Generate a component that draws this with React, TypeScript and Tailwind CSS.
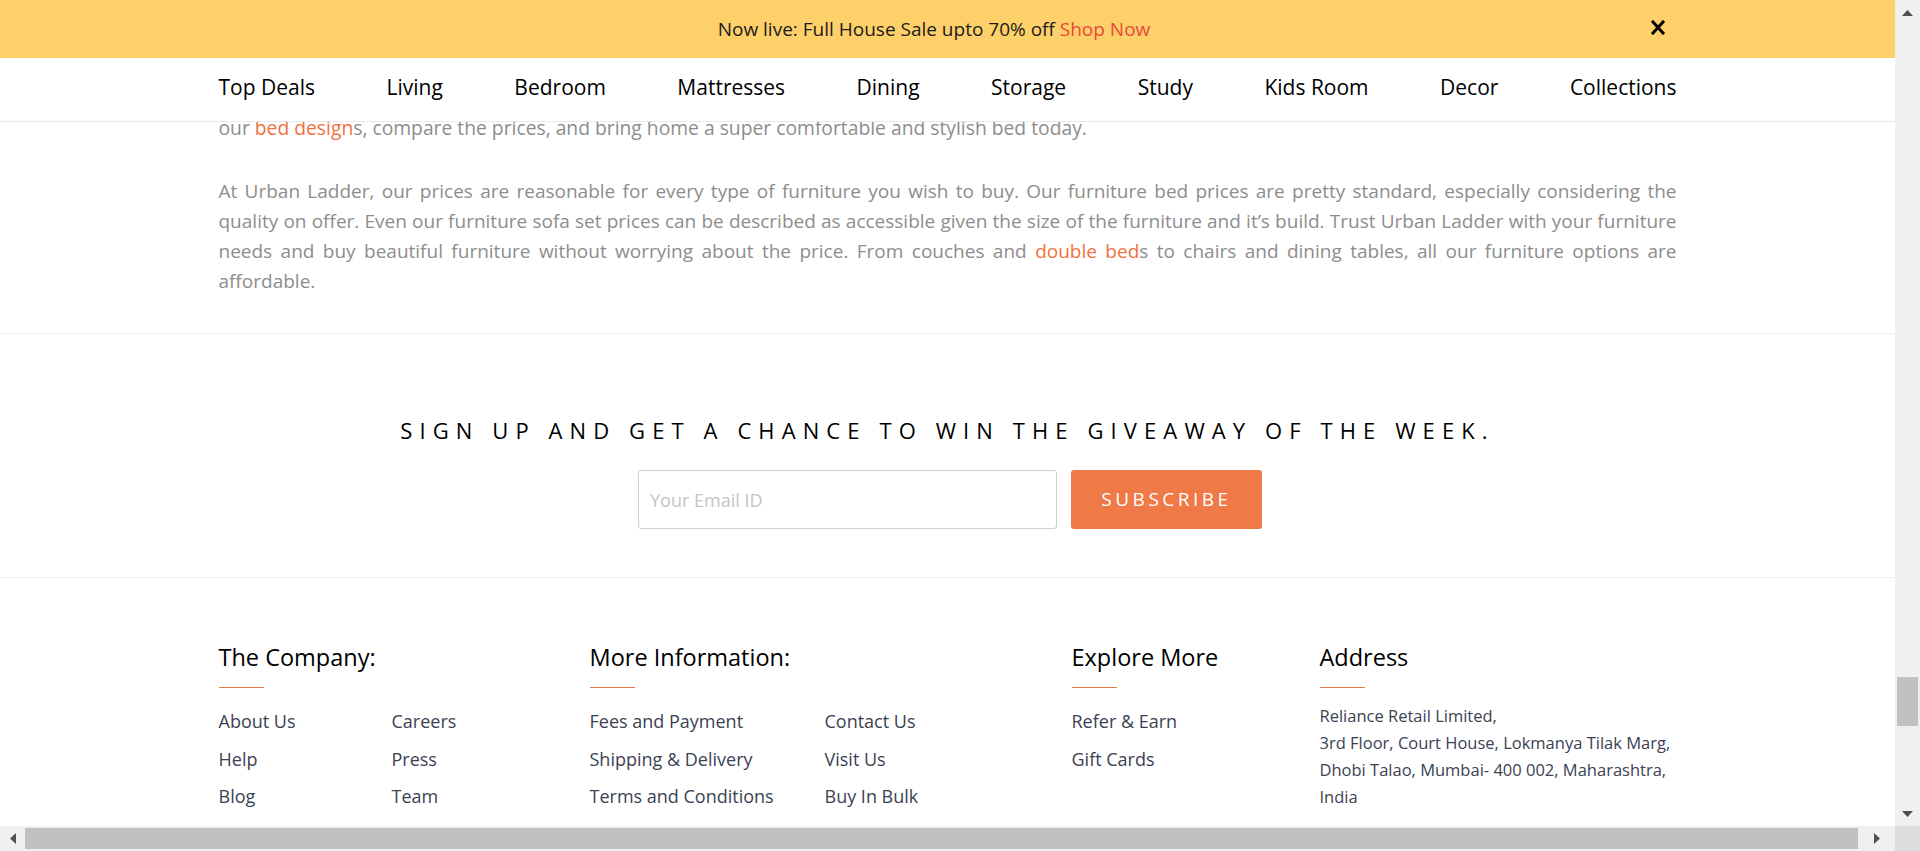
const navItems = [
  "Top Deals",
  "Living",
  "Bedroom",
  "Mattresses",
  "Dining",
  "Storage",
  "Study",
  "Kids Room",
  "Decor",
  "Collections",
];

const footerCols = [
  {
    title: "The Company:",
    sub: "grid-cols-[173px_1fr]",
    links: [
      ["About Us", "Help", "Blog"],
      ["Careers", "Press", "Team"],
    ],
  },
  {
    title: "More Information:",
    sub: "grid-cols-[235px_1fr]",
    links: [
      ["Fees and Payment", "Shipping & Delivery", "Terms and Conditions"],
      ["Contact Us", "Visit Us", "Buy In Bulk"],
    ],
  },
  {
    title: "Explore More",
    sub: "grid-cols-1",
    links: [["Refer & Earn", "Gift Cards"]],
  },
];

const address = [
  "Reliance Retail Limited,",
  "3rd Floor, Court House, Lokmanya Tilak Marg,",
  "Dhobi Talao, Mumbai- 400 002, Maharashtra,",
  "India",
];

function Link({ children }: { children: React.ReactNode }) {
  return <span className="text-[#f0713d]">{children}</span>;
}

function Triangle({ dir }: { dir: "up" | "down" | "left" | "right" }) {
  const points = {
    up: "0,6 5.5,0 11,6",
    down: "0,0 11,0 5.5,6",
    left: "6,0 6,11 0,5.5",
    right: "0,0 6,5.5 0,11",
  }[dir];
  const vertical = dir === "up" || dir === "down";
  return (
    <svg
      width={vertical ? 11 : 6}
      height={vertical ? 6 : 11}
      viewBox={vertical ? "0 0 11 6" : "0 0 6 11"}
    >
      <polygon points={points} fill="#505050" />
    </svg>
  );
}

function Header() {
  return (
    <>
      <div className="relative flex h-[58px] items-center justify-center bg-[#fed069] pr-[27px] text-[19px] text-[#1c1c1c]">
        <span>
          Now live: Full House Sale upto 70% off{" "}
          <span className="text-[#e9483e]">Shop Now</span>
        </span>
        <button className="absolute right-[230px] top-[20px]">
          <svg width="14" height="15" viewBox="0 0 14 15">
            <path
              d="M2 2 L12 13 M12 2 L2 13"
              stroke="#000"
              strokeWidth="3"
              strokeLinecap="square"
            />
          </svg>
        </button>
      </div>
      <nav className="h-[64px] border-b border-[#e9e9e9] bg-white">
        <ul className="mx-auto flex h-full w-[1458px] items-center justify-between pb-[4px] text-[21px] text-black">
          {navItems.map((item) => (
            <li key={item}>{item}</li>
          ))}
        </ul>
      </nav>
    </>
  );
}

function About() {
  const just = "whitespace-nowrap text-justify [text-align-last:justify]";
  return (
    <section className="overflow-hidden border-b border-[#eeeeee] pb-[37px]">
      <div className="mx-auto w-[1458px] text-[19px] leading-[30px] text-[#8d8d8d]">
        <p className="-mt-[9px] text-[19.3px]">
          our <Link>bed design</Link>s, compare the prices, and bring home a
          super comfortable and stylish bed today.
        </p>
        <div className="mt-[33px]">
          <div className={just}>
            At Urban Ladder, our prices are reasonable for every type of
            furniture you wish to buy. Our furniture bed prices are pretty
            standard, especially considering the
          </div>
          <div className={just}>
            quality on offer. Even our furniture sofa set prices can be
            described as accessible given the size of the furniture and it’s
            build. Trust Urban Ladder with your furniture
          </div>
          <div className={just}>
            needs and buy beautiful furniture without worrying about the price.
            From couches and <Link>double bed</Link>s to chairs and dining
            tables, all our furniture options are
          </div>
          <div>affordable.</div>
        </div>
      </div>
    </section>
  );
}

function Signup() {
  return (
    <section className="flex flex-col items-center border-b border-[#eeeeee] pt-[80px] pb-[48px]">
      <h2 className="text-[22px] leading-[33px] tracking-[7.1px] text-black">
        SIGN UP AND GET A CHANCE TO WIN THE GIVEAWAY OF THE WEEK.
      </h2>
      <div className="mt-[23px] ml-[5px] flex gap-[14px]">
        <input
          placeholder="Your Email ID"
          className="h-[59px] w-[419px] rounded-[3px] border border-[#cfcfcf] px-[11px] text-[18px] outline-none placeholder:text-[#c5c5c5]"
        />
        <button className="h-[59px] w-[191px] rounded-[3px] bg-[#ef7947] text-[19px] tracking-[3.5px] text-white">
          SUBSCRIBE
        </button>
      </div>
    </section>
  );
}

function Footer() {
  return (
    <footer className="pt-[63px]">
      <div className="mx-auto grid w-[1458px] grid-cols-[371px_482px_248px_1fr]">
        {footerCols.map((col) => (
          <div key={col.title}>
            <h3 className="text-[23.5px] leading-8 text-black">{col.title}</h3>
            <div className="mt-[14px] h-px w-[45px] bg-[#e8774b]" />
            <div className={`mt-[21px] grid ${col.sub}`}>
              {col.links.map((group, i) => (
                <ul
                  key={i}
                  className="flex flex-col gap-[13.5px] text-[18px] leading-6 text-[#3b4253]"
                >
                  {group.map((l) => (
                    <li key={l}>{l}</li>
                  ))}
                </ul>
              ))}
            </div>
          </div>
        ))}
        <div>
          <h3 className="text-[23.5px] leading-8 text-black">Address</h3>
          <div className="mt-[14px] h-px w-[45px] bg-[#e8774b]" />
          <div className="mt-[14px] text-[16.5px] leading-[27px] text-[#3b4253]">
            {address.map((line) => (
              <div key={line}>{line}</div>
            ))}
          </div>
        </div>
      </div>
    </footer>
  );
}

export default function App() {
  return (
    <div className="flex h-[851px] w-[1920px] flex-col overflow-hidden bg-white font-['Open_Sans',sans-serif]">
      <div className="flex min-h-0 flex-1">
        <main className="min-w-0 flex-1 overflow-hidden">
          <Header />
          <About />
          <Signup />
          <Footer />
        </main>
        <div className="flex w-[25px] flex-col items-center bg-[#f0f0f0]">
          <div className="flex h-[25px] items-center justify-center">
            <Triangle dir="up" />
          </div>
          <div className="mt-[652px] h-[49px] w-[21px] bg-[#c1c1c1]" />
          <div className="mt-auto flex h-[25px] items-center justify-center">
            <Triangle dir="down" />
          </div>
        </div>
      </div>
      <div className="flex h-[25px] bg-[#f0f0f0]">
        <div className="flex w-[25px] items-center justify-center">
          <Triangle dir="left" />
        </div>
        <div className="my-[2px] w-[1833px] bg-[#c1c1c1]" />
        <div className="flex flex-1 items-center justify-center">
          <Triangle dir="right" />
        </div>
        <div className="w-[25px] bg-[#dcdcdc]" />
      </div>
    </div>
  );
}
